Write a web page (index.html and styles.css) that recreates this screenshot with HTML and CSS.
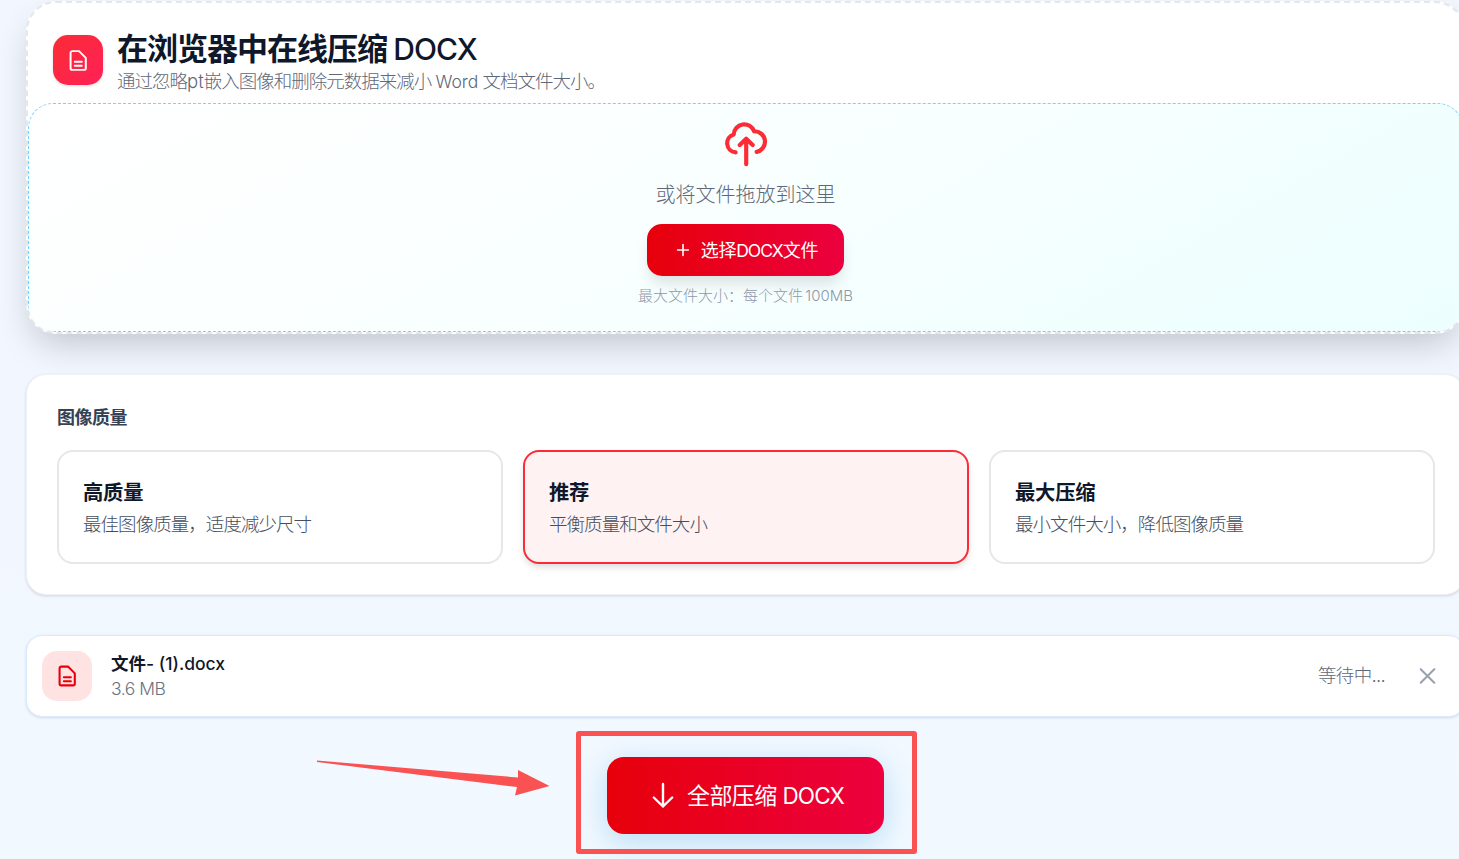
FILE: index.html
```html
<!DOCTYPE html>
<html lang="zh-CN">
<head>
  <meta charset="UTF-8" />
  <title>在线压缩 DOCX</title>
  <link rel="stylesheet" href="styles.css">
</head>
<body>
  <main class="page">

    <!-- 上传卡片 -->
    <section class="upload-card">
      <header class="tool-header">
        <div class="tool-icon">
          <svg width="25" height="25" viewBox="0 0 24 24" fill="none" stroke="currentColor" stroke-width="1.9" stroke-linecap="round" stroke-linejoin="round"><path d="M12.500 3H6A1.600 1.600 0 0 0 4.400 4.600v14.800A1.600 1.600 0 0 0 6 21h11.400a1.600 1.600 0 0 0 1.600-1.600V9.500zM8.500 13.200h6.700M8.500 17h6.700"/></svg>
        </div>
        <div>
          <h1>在浏览器中在线压缩 <span class="latin">DOCX</span></h1>
          <p class="tool-desc">通过忽略<span class="pt">pt</span>嵌入图像和删除元数据来减小 <span class="word">Word</span> 文档文件大小。</p>
        </div>
      </header>
      <div class="drop-zone">
        <svg class="cloud" width="50" height="50" viewBox="0 0 24 24" fill="none" stroke="currentColor" stroke-width="2" stroke-linecap="round" stroke-linejoin="round"><path d="M7 16a4.400 4.400 0 0 1-.9-8.600A5.050 5.050 0 0 1 15.900 5.900h.1a5 5 0 0 1 1.100 9.900M15.200 12.500 12.100 9.500l-3.100 3M12.100 9.700v12"/></svg>
        <p class="drop-text">或将文件拖放到这里</p>
        <button class="btn btn-select">
          <svg width="20" height="20" viewBox="0 0 20 20" fill="none" stroke="currentColor" stroke-width="1.6" stroke-linecap="round"><path d="M10 4.6v10.8M4.6 10h10.8"/></svg>
          <span class="btn-label">选择<span class="latin">DOCX</span>文件</span>
        </button>
        <p class="drop-hint">最大文件大小：每个文件 <span class="size">100MB</span></p>
      </div>
    </section>

    <!-- 图像质量 -->
    <section class="quality-card">
      <h2>图像质量</h2>
      <div class="options">
        <div class="option">
          <h3>高质量</h3>
          <p>最佳图像质量，适度减少尺寸</p>
        </div>
        <div class="option selected">
          <h3>推荐</h3>
          <p>平衡质量和文件大小</p>
        </div>
        <div class="option">
          <h3>最大压缩</h3>
          <p>最小文件大小，降低图像质量</p>
        </div>
      </div>
    </section>

    <!-- 文件列表 -->
    <section class="file-row">
      <div class="file-icon">
        <svg width="25" height="25" viewBox="0 0 24 24" fill="none" stroke="currentColor" stroke-width="2" stroke-linecap="round" stroke-linejoin="round"><path d="M12.500 2.500H6A1.600 1.600 0 0 0 4.400 4.100v14.800A1.600 1.600 0 0 0 6 20.500h11.400a1.600 1.600 0 0 0 1.600-1.600V9zM8.500 12.700h6.700M8.500 16.500h6.700"/></svg>
      </div>
      <div class="file-info">
        <p class="file-name"><b>文件</b>- (1).docx</p>
        <p class="file-size">3.6 MB</p>
      </div>
      <span class="status">等待中...</span>
      <svg class="close" width="25" height="25" viewBox="0 0 24 24" fill="none" stroke="currentColor" stroke-width="2" stroke-linecap="round"><path d="M5.500 5l13 13M18.500 5l-13 13"/></svg>
    </section>

    <div class="actions">
      <button class="btn btn-compress">
        <svg width="30" height="30" viewBox="0 0 30 30" fill="none" stroke="currentColor" stroke-width="2.400" stroke-linecap="round" stroke-linejoin="round"><path d="M16 3v22.500M6.800 16.500l9.200 9 9.200-9"/></svg>
        <span class="btn-label">全部压缩 <span class="latin">DOCX</span></span>
      </button>
    </div>
  </main>

  <!-- 标注 -->
  <div class="mark-box"></div>
  <svg class="mark-arrow" width="236" height="37" viewBox="0 0 236 37"><path d="M1 .5 202 17.500V10L233.500 26 199 35.500 201 27 1 2z" fill="#fa5252"/></svg>
</body>
</html>
```
FILE: styles.css
```css
* {
  box-sizing: border-box;
}

body {
  margin: 0;
  position: relative;
  width: 1459px;
  height: 859px;
  overflow: hidden;
  background: linear-gradient(180deg, #f1f6ff 0%, #f2f7ff 65%, #f1f9ff 100%);
  font-family: Inter, "Noto Sans CJK SC", sans-serif;
  font-weight: 300;
  color: #0f172a;
}

h1, h2, h3, p {
  margin: 0;
}

svg {
  flex: none;
}

.page {
  width: 1439px;
  margin-left: 26px;
  padding-top: 1px;
}

/* 上传卡片 */
.upload-card {
  height: 333px;
  display: flex;
  flex-direction: column;
  background: #fff;
  border: 2px dashed #e5e7eb;
  border-radius: 30px;
  overflow: hidden;
  box-shadow: 0 16px 36px -8px rgba(0, 0, 0, 0.22);
}

.tool-header {
  height: 100px;
  display: flex;
  gap: 14px;
  padding: 27px 25px 0;
}

.tool-icon {
  width: 50px;
  height: 50px;
  margin-top: 5px;
  display: flex;
  align-items: center;
  justify-content: center;
  color: #fff;
  background: linear-gradient(135deg, #fb2c36, #ff2056);
  border-radius: 15px;
  box-shadow: 0 1px 3px rgba(0, 0, 0, 0.15);
}

h1 {
  font-size: 31px;
  line-height: 37px;
  font-weight: 700;
  letter-spacing: -1px;
}

h1 .latin {
  font-size: 30px;
  font-weight: 500;
}

.tool-desc {
  font-size: 18.5px;
  line-height: 27px;
  letter-spacing: -1px;
  color: #5f6878;
}

.tool-desc .pt {
  letter-spacing: 0;
}

.tool-desc .word {
  font-size: 17.5px;
  letter-spacing: 0;
}

.drop-zone {
  flex: 1;
  display: flex;
  flex-direction: column;
  align-items: center;
  padding-top: 15px;
  border: 1px dashed #74d4ff;
  border-radius: 25px;
  background: linear-gradient(150deg, #fff 0%, #f8ffff 50%, #ecfeff 100%);
}

.cloud {
  color: #fb2c36;
}

.drop-text {
  margin-top: 11px;
  font-size: 20px;
  line-height: 30px;
  color: #5f6878;
}

.btn {
  display: flex;
  align-items: center;
  justify-content: center;
  border: none;
  color: #fff;
  font-family: inherit;
  background: linear-gradient(90deg, #e7000b, #ec003f);
}

.btn-label {
  padding-bottom: 3px;
}

.btn-select {
  width: 197px;
  height: 52px;
  margin-top: 14px;
  gap: 8px;
  font-size: 18px;
  letter-spacing: -0.3px;
  border-radius: 15px;
  box-shadow: 0 10px 15px -3px rgba(0, 0, 0, 0.12);
}

.btn-select .latin {
  font-size: 17.5px;
  font-weight: 400;
  letter-spacing: -1px;
}

.drop-hint {
  margin-top: 9px;
  font-size: 15px;
  line-height: 22px;
  color: #8f98a8;
}

.drop-hint .size {
  margin-left: -2px;
}

/* 图像质量 */
.quality-card {
  height: 221px;
  margin-top: 40px;
  padding: 30px;
  background: #fff;
  border: 1px solid #eef1f6;
  border-radius: 20px;
  box-shadow: 0 1px 3px rgba(0, 0, 0, 0.14);
}

h2 {
  font-size: 18px;
  line-height: 26px;
  font-weight: 700;
  letter-spacing: -0.5px;
  color: #364153;
}

.options {
  display: grid;
  grid-template-columns: repeat(3, 446px);
  gap: 20px;
  margin-top: 19px;
}

.option {
  height: 114px;
  padding: 26px 24px 24px;
  border: 2px solid #e5e7eb;
  border-radius: 16px;
}

.option.selected {
  border-color: #fb2c36;
  background: #fef2f2;
  box-shadow: 0 4px 7px -1px rgba(0, 0, 0, 0.14);
}

h3 {
  font-size: 20.3px;
  line-height: 30px;
  font-weight: 700;
  letter-spacing: -0.2px;
}

.option p {
  margin-top: 3px;
  font-size: 18.5px;
  line-height: 26px;
  letter-spacing: -0.95px;
  color: #434e5e;
}

/* 文件列表 */
.file-row {
  height: 82px;
  margin-top: 40px;
  padding: 0 24px 0 15px;
  display: flex;
  align-items: center;
  background: #fff;
  border: 1px solid #dbeafe;
  border-radius: 16px;
  box-shadow: 0 1px 3px rgba(0, 0, 0, 0.12);
}

.file-icon {
  width: 50px;
  height: 50px;
  display: flex;
  align-items: center;
  justify-content: center;
  color: #e7000b;
  background: #ffe2e2;
  border-radius: 15px;
}

.file-info {
  margin-left: 19px;
  flex: 1;
}

.file-name {
  font-size: 17.5px;
  line-height: 25px;
  font-weight: 500;
}

.file-size {
  font-size: 17.5px;
  line-height: 25px;
  letter-spacing: -0.5px;
  color: #6b7280;
}

.status {
  padding-bottom: 4px;
  font-size: 18.5px;
  letter-spacing: -0.7px;
  color: #5f6878;
}

.close {
  margin-left: 30px;
  color: #99a1af;
}

/* 压缩按钮 */
.actions {
  display: flex;
  justify-content: center;
  margin-top: 40px;
}

.btn-compress {
  width: 277px;
  height: 77px;
  gap: 10px;
  font-size: 23px;
  font-weight: 400;
  letter-spacing: -0.6px;
  border-radius: 17px;
  box-shadow: 0 8px 30px rgba(14, 140, 210, 0.25);
}

.btn-compress .latin {
  font-size: 22.5px;
  letter-spacing: -0.9px;
}

/* 标注 */
.mark-box {
  position: absolute;
  left: 576px;
  top: 731px;
  width: 341px;
  height: 123px;
  border: 5px solid #fa5252;
  border-radius: 3px;
}

.mark-arrow {
  position: absolute;
  left: 316px;
  top: 760px;
}
```
